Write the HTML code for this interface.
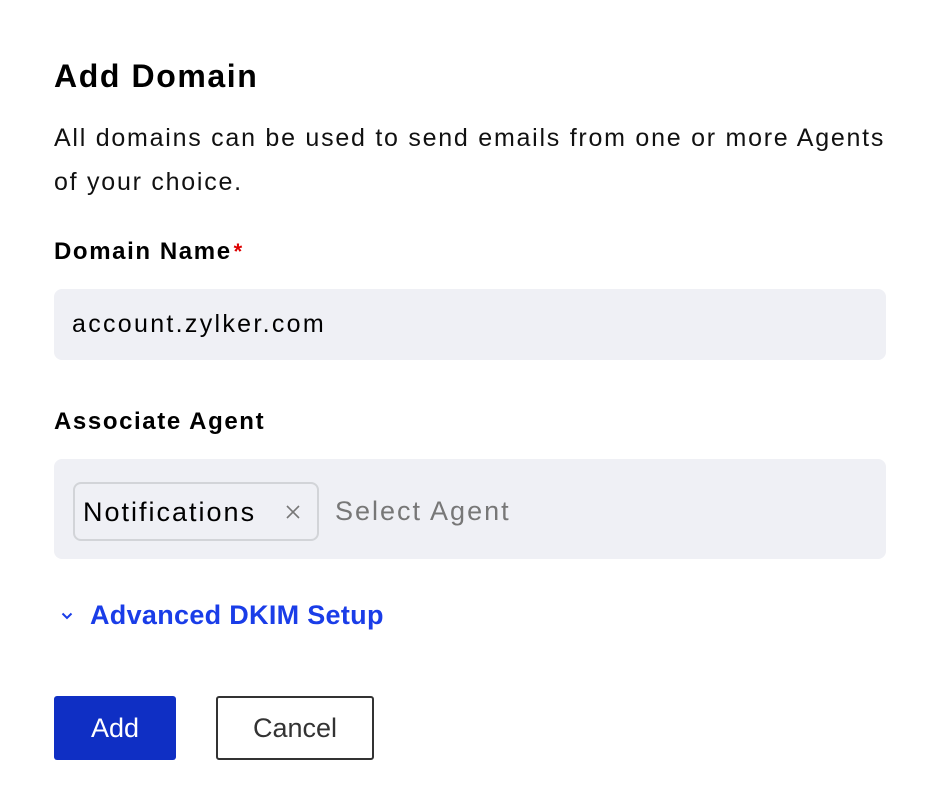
<!DOCTYPE html>
<html><head><style>
*{margin:0;padding:0;box-sizing:border-box}
body{width:942px;height:810px;background:#fff;font-family:"Liberation Sans",sans-serif;color:#000;position:relative;overflow:hidden}
.a{position:absolute;white-space:nowrap}
h1{position:absolute;left:54px;top:58px;font-size:32px;font-weight:600;letter-spacing:1.6px}
.d{left:54px;top:116px;font-size:25px;line-height:44px;white-space:normal;width:880px;color:#111;letter-spacing:1.75px}
.l{font-size:24px;font-weight:600;left:54px;letter-spacing:1.6px}
.box{position:absolute;left:54px;width:832px;background:#eff0f5;border-radius:8px}
</style></head><body>
<h1>Add Domain</h1>
<div class="a d">All domains can be used to send emails from one or more Agents<br>of your choice.</div>
<div class="a l" style="top:238px">Domain Name<span style="color:#d00;font-size:22px;margin-left:2px">*</span></div>
<div class="box" style="top:289px;height:71px"><div class="a" style="left:18px;top:21px;font-size:25px;letter-spacing:2.3px">account.zylker.com</div></div>
<div class="a l" style="top:408px">Associate Agent</div>
<div class="box" style="top:459px;height:100px">
<div class="a" style="left:19px;top:23px;width:246px;height:59px;border:2px solid #d2d4d8;border-radius:8px;background:#eff0f5">
<div class="a" style="left:8px;top:13px;font-size:27px;letter-spacing:2px">Notifications</div>
<svg class="a" style="left:210px;top:20px" width="16" height="16" viewBox="0 0 16 16"><path d="M2 2L14 14M14 2L2 14" stroke="#777" stroke-width="1.6"/></svg>
</div>
<div class="a" style="left:281px;top:37px;font-size:27px;color:#777;letter-spacing:2px">Select Agent</div>
</div>
<svg class="a" style="left:61px;top:612px" width="12" height="8" viewBox="0 0 12 8"><path d="M1.5 1.5L6 6L10.5 1.5" stroke="#1a3de8" stroke-width="2" fill="none"/></svg>
<div class="a" style="left:90px;top:600px;font-size:27px;font-weight:600;color:#1a3de8;letter-spacing:0.3px">Advanced DKIM Setup</div>
<div class="a" style="left:54px;top:696px;width:122px;height:64px;background:#0f2fc4;border-radius:3px;color:#fff;font-size:27px;text-align:center;line-height:64px">Add</div>
<div class="a" style="left:216px;top:696px;width:158px;height:64px;border:2px solid #333;border-radius:3px;color:#333;font-size:27px;text-align:center;line-height:60px">Cancel</div>
</body></html>
